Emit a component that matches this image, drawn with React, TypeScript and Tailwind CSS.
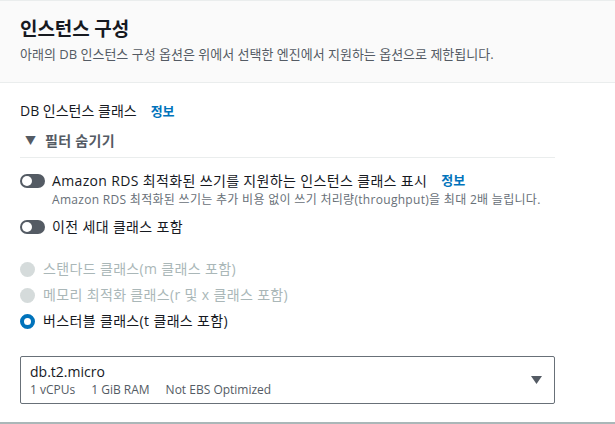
import React from 'react';

const font = { fontFamily: '"Open Sans", "Noto Sans CJK KR", sans-serif' };

function Toggle() {
  return (
    <span className="relative inline-flex w-[25px] h-[14px] rounded-full bg-[#545b64] flex-shrink-0">
      <span className="absolute left-[2px] top-[2px] w-[10px] h-[10px] rounded-full bg-white" />
    </span>
  );
}

function Radio({ checked, disabled }: { checked?: boolean; disabled?: boolean }) {
  if (checked) {
    return <span className="w-[15px] h-[15px] rounded-full border-[4px] border-[#0073bb] bg-white flex-shrink-0" />;
  }
  return (
    <span
      className={`w-[15px] h-[15px] rounded-full flex-shrink-0 ${disabled ? 'bg-[#d5dbdb]' : 'border-2 border-[#aab7b8]'}`}
    />
  );
}

export default function App() {
  return (
    <div className="w-[615px] h-[424px] bg-white overflow-hidden text-[#16191f]" style={font}>
      {/* Header */}
      <div className="h-[83px] bg-[#fafafa] border-t border-b border-[#eaeded] px-5 pt-[16px]">
        <h2 className="text-[19px] leading-[25px] font-bold tracking-[-0.1px]">인스턴스 구성</h2>
        <p className="text-[13px] leading-[17px] text-[#545b64] mt-[4px]">
          아래의 DB 인스턴스 구성 옵션은 위에서 선택한 엔진에서 지원하는 옵션으로 제한됩니다.
        </p>
      </div>

      {/* Body */}
      <div className="px-5">
        <div className="w-[535px]">
          <div className="flex items-center gap-[14px] text-[14px] leading-[20px] mt-[18px]">
            <span>DB 인스턴스 클래스</span>
            <span className="text-[#0073bb] font-semibold text-[13px]">정보</span>
          </div>

          <div className="flex items-center gap-[9px] mt-[10px] pb-[6px] border-b border-[#eaeded]">
            <span className="ml-[5px] text-[#545b64] text-[11px] leading-[20px]">▼</span>
            <span className="text-[14px] leading-[20px] text-[#545b64] font-semibold tracking-[0.3px]">필터 숨기기</span>
          </div>

          <div className="mt-[13px] flex items-center gap-[7px]">
            <Toggle />
            <span className="text-[14px] leading-[20px] tracking-[0.35px]">Amazon RDS 최적화된 쓰기를 지원하는 인스턴스 클래스 표시</span>
            <span className="ml-[7px] text-[#0073bb] font-semibold text-[13px]">정보</span>
          </div>
          <p className="ml-[32px] text-[12px] leading-[17px] text-[#687078] tracking-[0.3px]">
            Amazon RDS 최적화된 쓰기는 추가 비용 없이 쓰기 처리량(throughput)을 최대 2배 늘립니다.
          </p>

          <div className="mt-[9px] flex items-center gap-[7px]">
            <Toggle />
            <span className="text-[14px] leading-[20px] tracking-[0.35px]">이전 세대 클래스 포함</span>
          </div>

          <div className="mt-[22px] flex flex-col gap-[6px]">
            <div className="flex items-center gap-[8px]">
              <Radio disabled />
              <span className="text-[14px] leading-[20px] text-[#aab7b8] tracking-[0.35px]">스탠다드 클래스(m 클래스 포함)</span>
            </div>
            <div className="flex items-center gap-[8px]">
              <Radio disabled />
              <span className="text-[14px] leading-[20px] text-[#aab7b8] tracking-[0.35px]">메모리 최적화 클래스(r 및 x 클래스 포함)</span>
            </div>
            <div className="flex items-center gap-[8px]">
              <Radio checked />
              <span className="text-[14px] leading-[20px] tracking-[0.35px]">버스터블 클래스(t 클래스 포함)</span>
            </div>
          </div>

          <div className="mt-[25px] h-[48px] border border-[#687078] rounded-[2px] flex items-center justify-between pl-[9px] pr-[12px]">
            <div>
              <div className="text-[14px] leading-[18px]">db.t2.micro</div>
              <div className="flex gap-[16px] text-[12px] leading-[17px] text-[#545b64]">
                <span>1 vCPUs</span>
                <span>1 GiB RAM</span>
                <span>Not EBS Optimized</span>
              </div>
            </div>
            <svg width="11" height="8" viewBox="0 0 11 8">
              <path d="M0 0h11L5.5 8z" fill="#545b64" />
            </svg>
          </div>
        </div>
      </div>

      <div className="mt-[18px] border-t-2 border-[#aab7b8]" />
    </div>
  );
}
